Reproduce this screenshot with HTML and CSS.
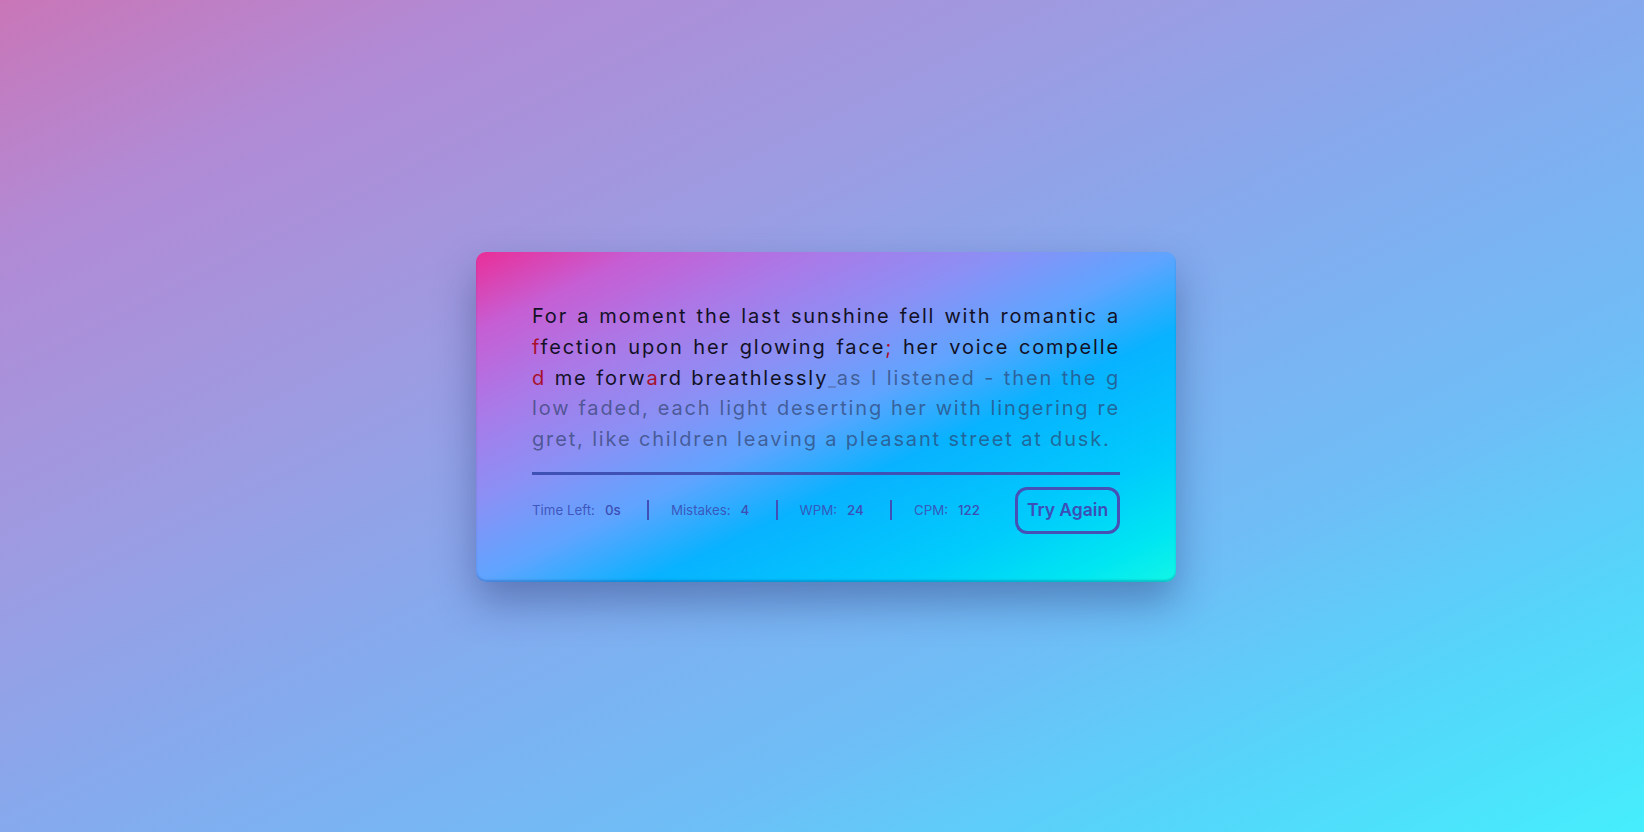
FILE: index.html
```html
<!DOCTYPE html>
<html lang="en">
<head>
<meta charset="utf-8">
<title>Typing Speed Test</title>
<link rel="stylesheet" href="styles.css">
</head>
<body>
  <div class="wrapper">
    <input type="text" class="input-field">
    <div class="content-box">
      <div class="typing-text">
        <p class="line">For a moment the last sunshine fell with romantic a</p>
        <p class="line"><span class="incorrect">f</span>fection upon her glowing face<span class="incorrect">;</span> her voice compelle</p>
        <p class="line"><span class="incorrect">d</span> me forw<span class="incorrect">a</span>rd breathlessly<span class="active"> </span><span class="pending">as I listened - then the g</span></p>
        <p class="line pending">low faded, each light deserting her with lingering re</p>
        <p class="line last pending">gret, like children leaving a pleasant street at dusk.</p>
      </div>
      <div class="content">
        <ul class="result-details">
          <li class="time"><p>Time Left:</p><span>0s</span></li>
          <li class="mistake"><p>Mistakes:</p><span>4</span></li>
          <li class="wpm"><p>WPM:</p><span>24</span></li>
          <li class="cpm"><p>CPM:</p><span>122</span></li>
        </ul>
        <button class="try-again">Try Again</button>
      </div>
    </div>
  </div>
</body>
</html>
```
FILE: styles.css
```css
* {
  margin: 0;
  padding: 0;
  box-sizing: border-box;
}

body {
  min-height: 100vh;
  display: flex;
  align-items: center;
  justify-content: center;
  padding-left: 8px;
  padding-top: 2px;
  font-family: Inter, "Noto Sans", sans-serif;
  background: linear-gradient(to bottom right,
    #c976b7 0%,
    #b18ad5 15%,
    #9c9ce2 35%,
    #86a9ed 50%,
    #6fbdf6 70%,
    #54d6fa 85%,
    #45eefc 100%);
}

.wrapper {
  width: 700px;
  padding: 35px;
  border-radius: 10px;
  background: linear-gradient(to bottom right,
    #ea2e97 0%,
    #c65ed4 12%,
    #a97ae8 25%,
    #8a90f5 38%,
    #5fa4ff 50%,
    #08b2ff 62%,
    #00cbfc 80%,
    #00e6f2 92%,
    #12f6e6 100%);
  box-shadow: 0 20px 40px rgba(20, 30, 90, 0.36),
              inset 0 -2px 2px rgba(0, 20, 80, 0.22);
}

.input-field {
  position: absolute;
  opacity: 0;
  z-index: -999;
}

.content-box {
  padding: 13px 20px 0;
  border: 1px solid transparent;
  border-radius: 10px;
}

.typing-text .line {
  font-size: 20px;
  line-height: 30.8px;
  letter-spacing: 1.85px;
  white-space: nowrap;
  color: #121126;
  text-align: justify;
  text-align-last: justify;
}

.typing-text .line.last {
  text-align-last: auto;
}

.typing-text .pending {
  color: rgba(45, 62, 105, 0.68);
}

.typing-text .incorrect {
  color: #a8102c;
}

.typing-text .active {
  position: relative;
}

.typing-text .active::before {
  content: "";
  position: absolute;
  left: 0;
  bottom: 2px;
  width: 8px;
  height: 2px;
  background: rgba(80, 100, 150, 0.5);
}

.content {
  margin-top: 17px;
  padding: 12px 0;
  border-top: 3px solid #3f51b5;
  display: flex;
  align-items: center;
  justify-content: space-between;
}

.result-details {
  display: flex;
  width: calc(100% - 140px);
  justify-content: space-between;
  list-style: none;
}

.result-details li {
  display: flex;
  align-items: center;
  height: 20px;
}

.result-details li:not(:first-child) {
  padding-left: 22px;
  border-left: 2px solid #4150b6;
}

.result-details li p {
  font-size: 13.3px;
  color: rgba(58, 78, 180, 0.9);
}

.result-details li span {
  margin-left: 10px;
  font-size: 13.3px;
  font-weight: 500;
  color: #3d4fb4;
}

.try-again {
  width: 105px;
  padding: 8.5px 0;
  font-family: Inter, "Noto Sans", sans-serif;
  font-size: 17.5px;
  line-height: 24px;
  font-weight: 600;
  color: #3c4fb6;
  background: transparent;
  border: 3px solid #4650b5;
  border-radius: 12px;
  cursor: pointer;
}
```
